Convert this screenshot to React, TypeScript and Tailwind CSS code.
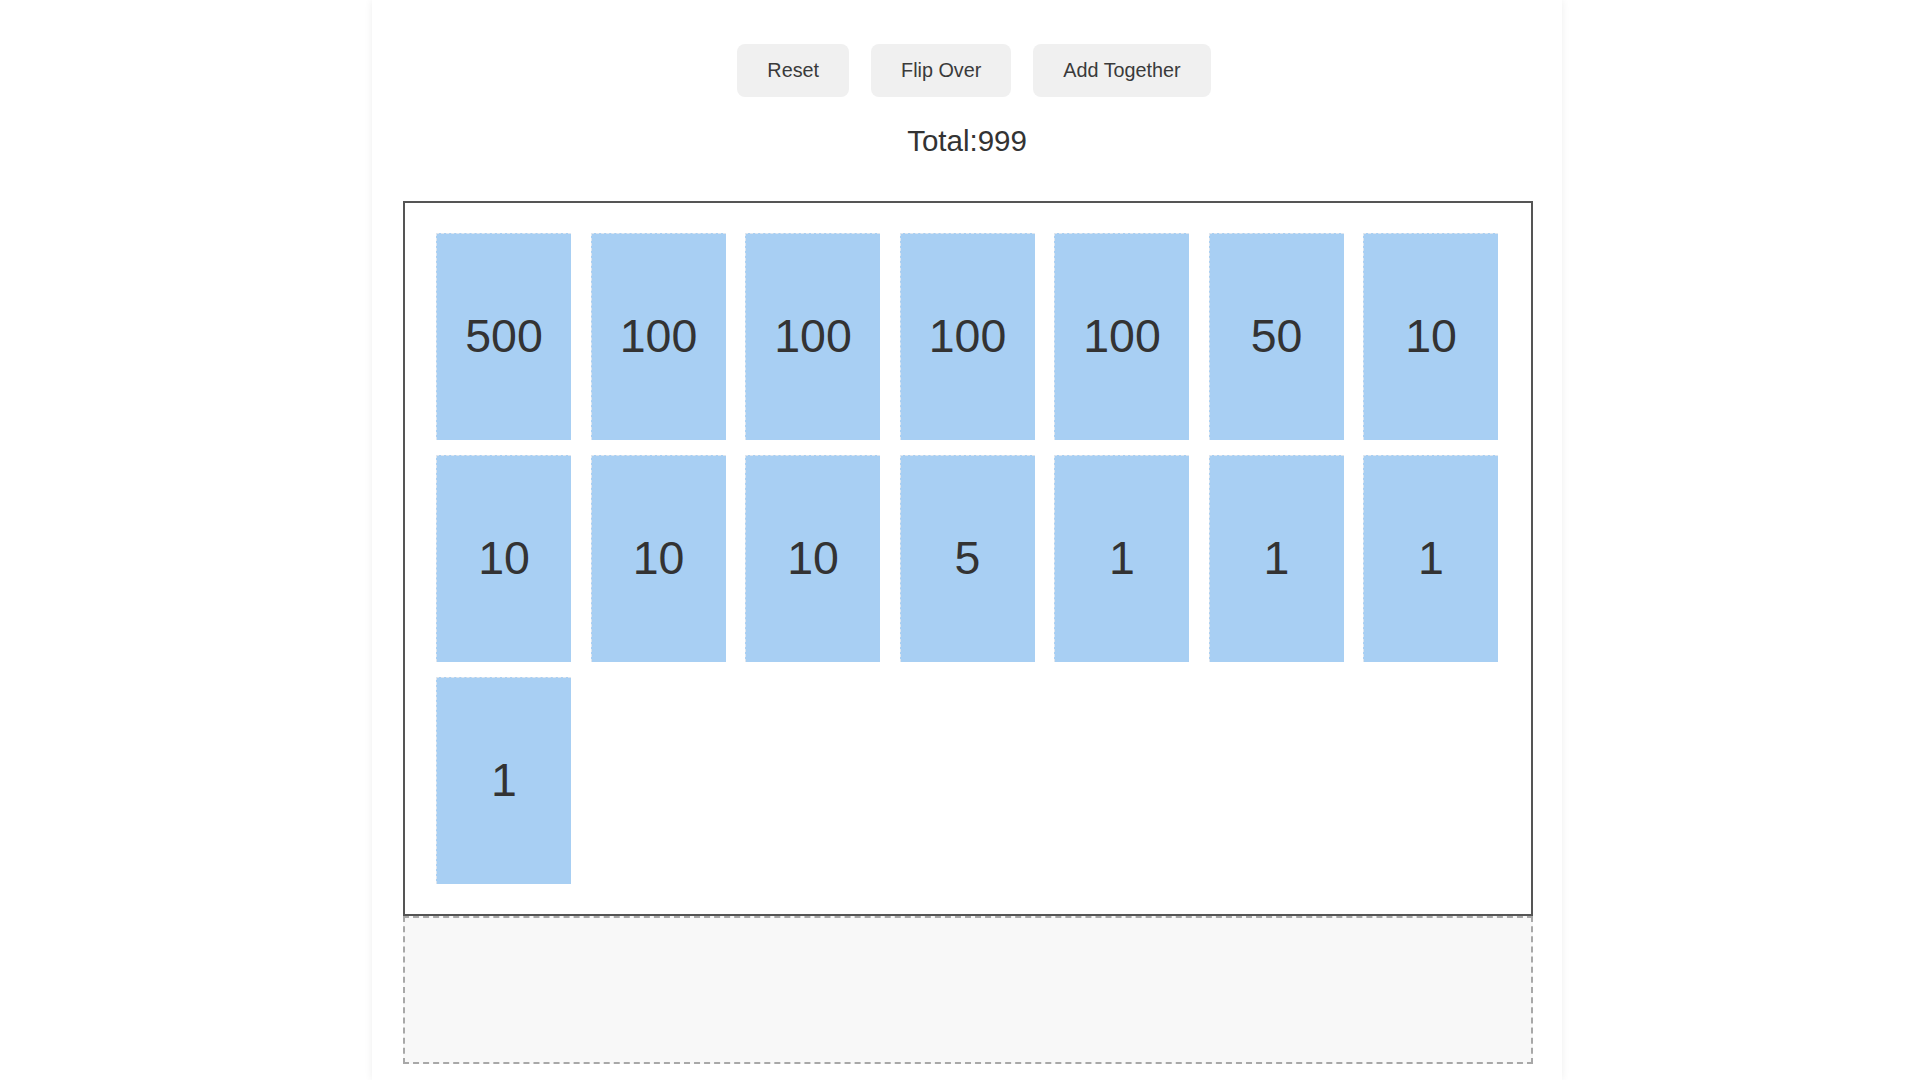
import React from "react";

const values = [500, 100, 100, 100, 100, 50, 10, 10, 10, 10, 5, 1, 1, 1, 1];

export default function App() {
  return (
    <div className="min-h-screen bg-white font-['Liberation_Sans',Arial,sans-serif] text-[#333]">
      <div className="ml-[372px] w-[1190px] min-h-[1080px] bg-white shadow-[0_0_8px_rgba(0,0,0,0.07)] pt-[44px]">
        <div className="flex justify-center gap-[22px] pl-[14px]">
          <button className="h-[53px] px-[30px] rounded-[8px] bg-[#f0f0f0] text-[19.8px] text-[#3a3a3a]">Reset</button>
          <button className="h-[53px] px-[30px] rounded-[8px] bg-[#f0f0f0] text-[19.8px] text-[#3a3a3a]">Flip Over</button>
          <button className="h-[53px] px-[30px] rounded-[8px] bg-[#f0f0f0] text-[19.8px] text-[#3a3a3a]">Add Together</button>
        </div>
        <div className="mt-[27px] text-center text-[29.5px] leading-[33px] text-[#333]">Total:999</div>
        <div className="ml-[31px] mt-[43.5px] w-[1130px]">
          <div className="border-2 border-[#555] pt-[30px] pb-[30px] px-[31px]">
            <div className="flex flex-wrap gap-x-[19.5px] gap-y-[15px]">
              {values.map((v, i) => (
                <div
                  key={i}
                  className="w-[135px] h-[207px] bg-[#a8cff3] border-t border-l border-dashed border-[#dfe6ee] flex items-center justify-center text-[46.5px] text-[#333]"
                >
                  {v}
                </div>
              ))}
            </div>
          </div>
          <div className="h-[148px] border-2 border-dashed border-[#a8a8a8] bg-[#f8f8f8]" />
        </div>
      </div>
    </div>
  );
}
